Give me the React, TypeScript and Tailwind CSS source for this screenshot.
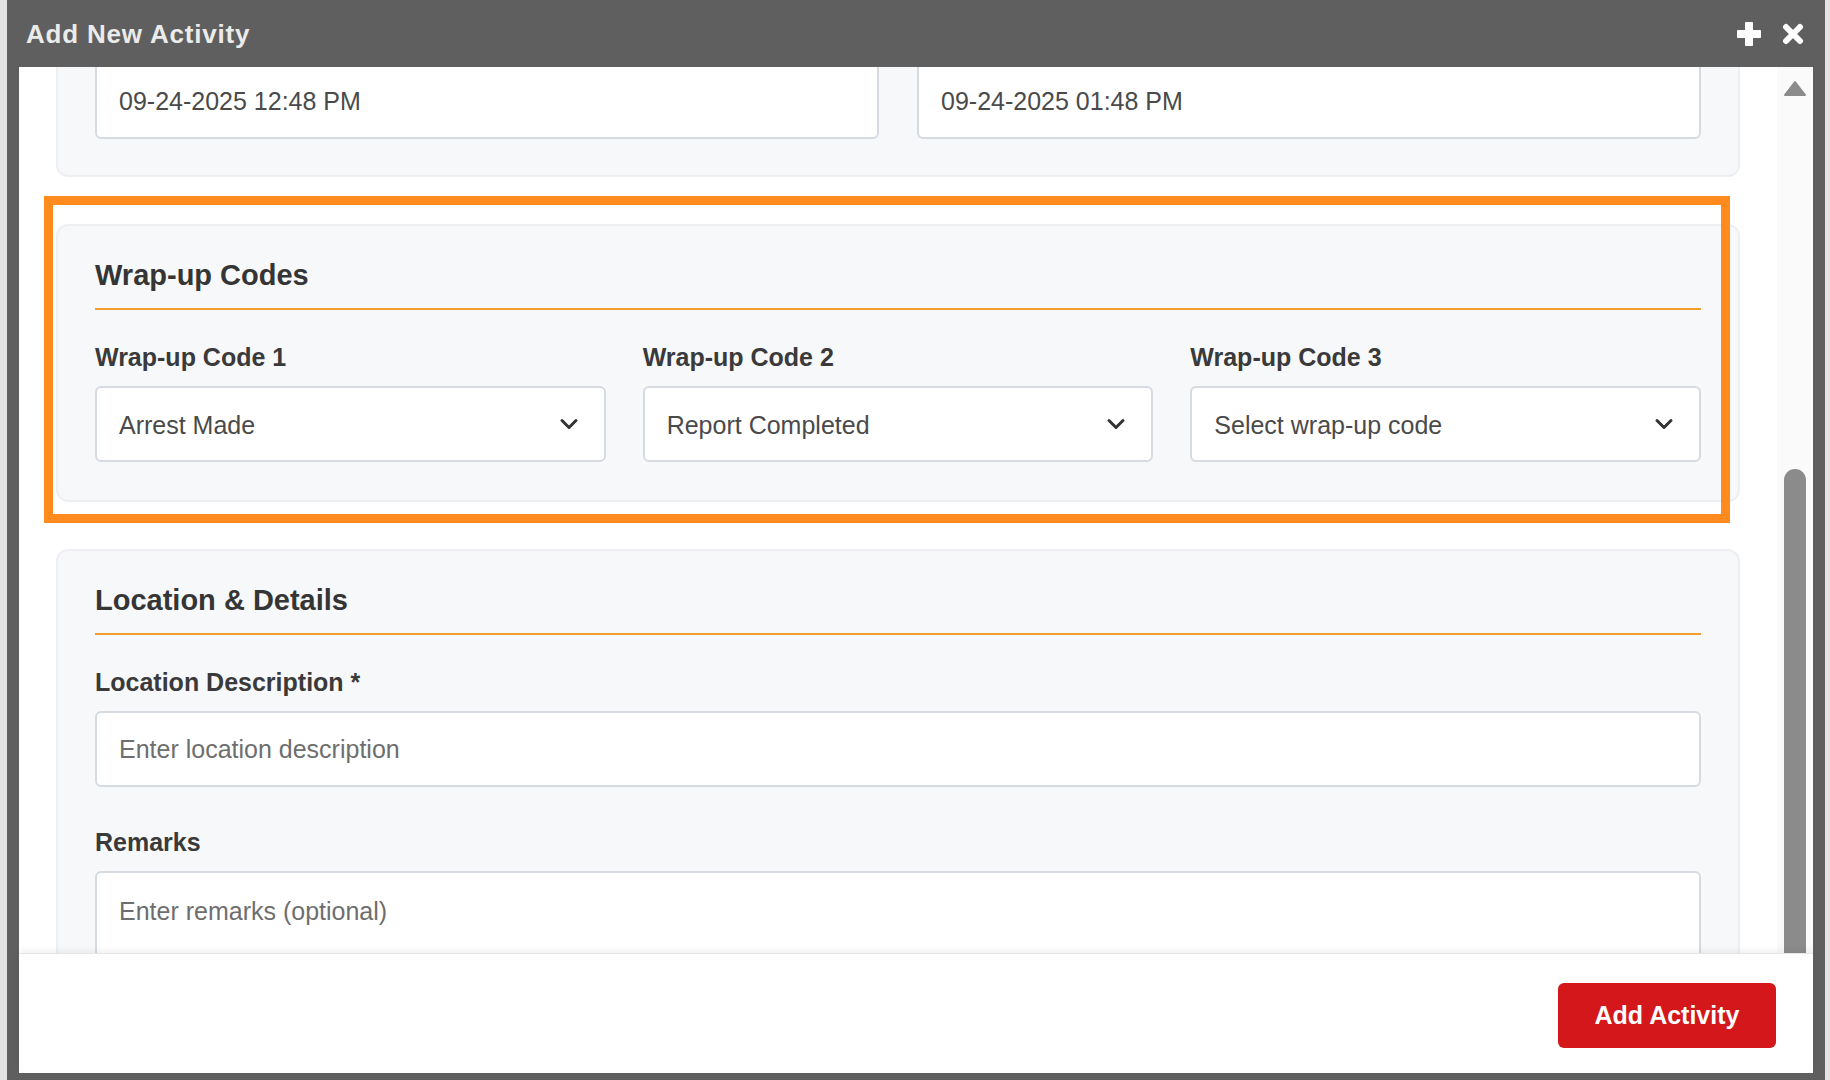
import type { ReactNode } from 'react'

const wrapUpCodes = [
  { label: 'Wrap-up Code 1', value: 'Arrest Made' },
  { label: 'Wrap-up Code 2', value: 'Report Completed' },
  { label: 'Wrap-up Code 3', value: 'Select wrap-up code' },
]

function PlusIcon() {
  return (
    <svg width="26" height="26" viewBox="0 0 26 26" fill="#fff">
      <path d="M9.5 1.5h7v8h8v7h-8v8h-7v-8h-8v-7h8z" stroke="#fff" strokeWidth="1" strokeLinejoin="round" />
    </svg>
  )
}

function CloseIcon() {
  return (
    <svg width="22" height="22" viewBox="0 0 22 22" fill="none" stroke="#fff" strokeWidth="6" strokeLinecap="round">
      <path d="M4 4l14 14M18 4L4 18" />
    </svg>
  )
}

function Chevron() {
  return (
    <svg width="20" height="12" viewBox="0 0 20 12" fill="none" stroke="#333" strokeWidth="3" strokeLinecap="round" strokeLinejoin="round">
      <path d="M3 2.5l7 7 7-7" />
    </svg>
  )
}

function Card({ children, className = '' }: { children: ReactNode; className?: string }) {
  return (
    <div className={`rounded-[12px] border-2 border-[#edeff2] bg-[#f7f8fa] px-[37px] ${className}`}>
      {children}
    </div>
  )
}

function SectionTitle({ children }: { children: ReactNode }) {
  return (
    <h3 className="border-b-2 border-[#f49c2c] pb-[16px] pt-[1px] text-[29px] font-bold leading-[34px] text-[#353535]">
      {children}
    </h3>
  )
}

function Label({ children }: { children: ReactNode }) {
  return (
    <label className="mb-[14px] block text-[25px] font-bold leading-[30px] text-[#3a3a3a]">{children}</label>
  )
}

function SelectField({ value }: { value: string }) {
  return (
    <div className="relative">
      <select
        defaultValue={value}
        className="h-[76px] w-full appearance-none rounded-[6px] border-2 border-[#d6dbe1] bg-white pl-[22px] pt-[3px] text-[25px] text-[#4a4a4a] outline-none"
      >
        <option>{value}</option>
      </select>
      <span className="pointer-events-none absolute right-[27px] top-1/2 -translate-y-1/2">
        <Chevron />
      </span>
    </div>
  )
}

export default function App() {
  return (
    <div className="flex h-[1080px] w-[1830px] bg-[#e2e2e2] pl-[7px] font-['Liberation_Sans',Arial,sans-serif]">
      <div className="flex h-full w-[1818px] flex-col bg-[#5f5f5f] px-[12px] pb-[7px]">
        {/* title bar */}
        <div className="flex h-[67px] shrink-0 items-center justify-between pl-[7px] pr-[9px]">
          <h2 className="pt-[1px] text-[26px] font-bold tracking-[0.8px] text-[#ebebeb]">Add New Activity</h2>
          <div className="flex items-center gap-[20px]">
            <button>
              <PlusIcon />
            </button>
            <button>
              <CloseIcon />
            </button>
          </div>
        </div>

        <div className="flex min-h-0 flex-1 flex-col bg-white">
          <div className="flex min-h-0 flex-1">
            {/* scrolled form body */}
            <div className="min-w-0 flex-1 overflow-hidden px-[37px]">
              <div className="-mt-[42px] flex flex-col gap-[47px]">
                <Card className="pt-[36px] pb-[36px]">
                  <div className="grid grid-cols-2 gap-[38px]">
                    <input
                      readOnly
                      value="09-24-2025 12:48 PM"
                      className="h-[76px] w-full rounded-[6px] border-2 border-[#d6dbe1] bg-white pl-[22px] text-[25px] text-[#4a4a4a] outline-none"
                    />
                    <input
                      readOnly
                      value="09-24-2025 01:48 PM"
                      className="h-[76px] w-full rounded-[6px] border-2 border-[#d6dbe1] bg-white pl-[22px] text-[25px] text-[#4a4a4a] outline-none"
                    />
                  </div>
                </Card>

                <div className="relative">
                  <Card className="pt-[31px] pb-[38px]">
                    <SectionTitle>Wrap-up Codes</SectionTitle>
                    <div className="mt-[32px] grid grid-cols-3 gap-[37px]">
                      {wrapUpCodes.map((code) => (
                        <div key={code.label}>
                          <Label>{code.label}</Label>
                          <SelectField value={code.value} />
                        </div>
                      ))}
                    </div>
                  </Card>
                  <div className="pointer-events-none absolute -left-[12px] -top-[28px] right-[10px] -bottom-[21px] z-10 border-[9px] border-[#ff8b1e]" />
                </div>

                <Card className="pt-[31px] pb-[38px]">
                  <SectionTitle>Location &amp; Details</SectionTitle>
                  <div className="mt-[32px]">
                    <Label>Location Description *</Label>
                    <input
                      placeholder="Enter location description"
                      className="h-[76px] w-full rounded-[6px] border-2 border-[#d6dbe1] bg-white pl-[22px] text-[25px] text-[#4a4a4a] outline-none placeholder:text-[#6e6e6e]"
                    />
                  </div>
                  <div className="mt-[40px]">
                    <Label>Remarks</Label>
                    <textarea
                      placeholder="Enter remarks (optional)"
                      className="block h-[150px] w-full resize-none rounded-[6px] border-2 border-[#d6dbe1] bg-white pl-[22px] pt-[23px] text-[25px] leading-[30px] text-[#4a4a4a] outline-none placeholder:text-[#6e6e6e]"
                    />
                  </div>
                </Card>
              </div>
            </div>

            {/* scrollbar */}
            <div className="flex w-[36px] shrink-0 flex-col items-center bg-[#fafafa]">
              <svg className="mt-[13px]" width="24" height="17" viewBox="0 0 24 17">
                <path d="M12 2L22 15H2z" fill="#8b8b8b" stroke="#8b8b8b" strokeWidth="2" strokeLinejoin="round" />
              </svg>
              <div className="mt-[372px] w-[22px] flex-1 rounded-t-[11px] bg-[#8b8b8b]" />
            </div>
          </div>

          {/* footer */}
          <div className="relative z-20 flex h-[120px] shrink-0 justify-end border-t border-[#e6e6e6] bg-white pr-[37px] pt-[29px] shadow-[0_-3px_6px_rgba(0,0,0,0.06)]">
            <button className="h-[65px] w-[218px] rounded-[6px] bg-[#d3171b] text-[25px] font-bold text-white">
              Add Activity
            </button>
          </div>
        </div>
      </div>
    </div>
  )
}
